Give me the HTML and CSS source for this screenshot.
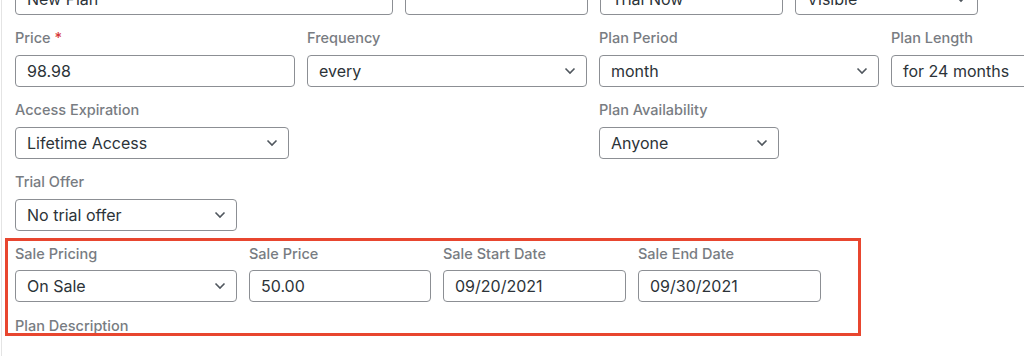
FILE: index.html
```html
<!DOCTYPE html>
<html>

<head>
    <title>Edit Plan</title>
    <link rel="stylesheet" href="styles.css">
    <meta name="viewport" content="width=device-width, initial-scale=1">
</head>

<body>
    <div class="panel">
        <div class="row row-top">
            <div class="field w-378"><div class="control">New Plan</div></div>
            <div class="field w-183"><div class="control"></div></div>
            <div class="field w-183"><div class="control">Trial Now</div></div>
            <div class="field w-183"><div class="control select">Visible</div></div>
        </div>

        <div class="grid">
            <div class="field">
                <label>Price <span class="req">*</span></label>
                <div class="control">98.98</div>
            </div>
            <div class="field">
                <label>Frequency</label>
                <div class="control select">every</div>
            </div>
            <div class="field">
                <label>Plan Period</label>
                <div class="control select">month</div>
            </div>
            <div class="field">
                <label>Plan Length</label>
                <div class="control select">for 24 months</div>
            </div>

            <div class="field span-2">
                <label>Access Expiration</label>
                <div class="control select w-274">Lifetime Access</div>
            </div>
            <div class="field">
                <label>Plan Availability</label>
                <div class="control select w-180">Anyone</div>
            </div>
        </div>

        <div class="row">
            <div class="field w-222">
                <label>Trial Offer</label>
                <div class="control select">No trial offer</div>
            </div>
        </div>

        <div class="highlight">
            <div class="row">
                <div class="field w-222">
                    <label>Sale Pricing</label>
                    <div class="control select">On Sale</div>
                </div>
                <div class="field w-182">
                    <label>Sale Price</label>
                    <div class="control">50.00</div>
                </div>
                <div class="field w-183">
                    <label>Sale Start Date</label>
                    <div class="control">09/20/2021</div>
                </div>
                <div class="field w-183">
                    <label>Sale End Date</label>
                    <div class="control">09/30/2021</div>
                </div>
            </div>
            <div class="row">
                <div class="field">
                    <label>Plan Description</label>
                </div>
            </div>
        </div>
    </div>
</body>

</html>
```

FILE: styles.css
```css
html,
body {
    margin: 0;
    overflow: hidden;
    background: #fff;
}

body {
    font-family: Inter, "Liberation Sans", sans-serif;
    height: 356px;
}

.panel {
    margin-left: 1px;
    margin-top: -17px;
    border-left: 1px solid #e4e4e4;
    padding-left: 13px;
    height: 400px;
}

.row {
    display: flex;
    gap: 12px;
    margin-top: 13px;
}

.row-top {
    margin-top: 0;
}

.grid {
    display: grid;
    grid-template-columns: repeat(4, 280px);
    column-gap: 12px;
    row-gap: 13px;
    margin-top: 13px;
}

.span-2 {
    grid-column: span 2;
}

.field {
    display: flex;
    flex-direction: column;
    flex-shrink: 0;
}

.field label {
    font-size: 14.5px;
    font-weight: 500;
    line-height: 20px;
    color: #787c82;
    margin-bottom: 7px;
    white-space: nowrap;
}

.req {
    color: #d63638;
}

.control {
    box-sizing: border-box;
    height: 32px;
    border: 1px solid #8c8f94;
    border-radius: 4px;
    padding: 0 11px;
    font-size: 16px;
    line-height: 30px;
    color: #2c3338;
    background: #fff;
    white-space: nowrap;
    overflow: hidden;
}

.select {
    padding-right: 30px;
    background: #fff url("data:image/svg+xml;utf8,<svg xmlns='http://www.w3.org/2000/svg' width='12' height='8' viewBox='0 0 12 8'><path d='M1.5 1.5 L6 6 L10.5 1.5' fill='none' stroke='%2350575e' stroke-width='1.6'/></svg>") no-repeat right 10px center;
}

.w-378 { width: 378px; }
.w-183 { width: 183px; }
.w-182 { width: 182px; }
.w-222 { width: 222px; }
.w-274 { width: 274px; }
.w-180 { width: 180px; }

.highlight {
    box-sizing: border-box;
    width: 856px;
    height: 98px;
    margin-top: 7px;
    margin-left: -10px;
    padding: 3px 7px 0;
    border: 3px solid #e8462f;
    overflow: hidden;
}

.highlight .row {
    margin-top: 14px;
}

.highlight .row:first-child {
    margin-top: 0;
}

.highlight .field label {
    margin-bottom: 6px;
}
```
